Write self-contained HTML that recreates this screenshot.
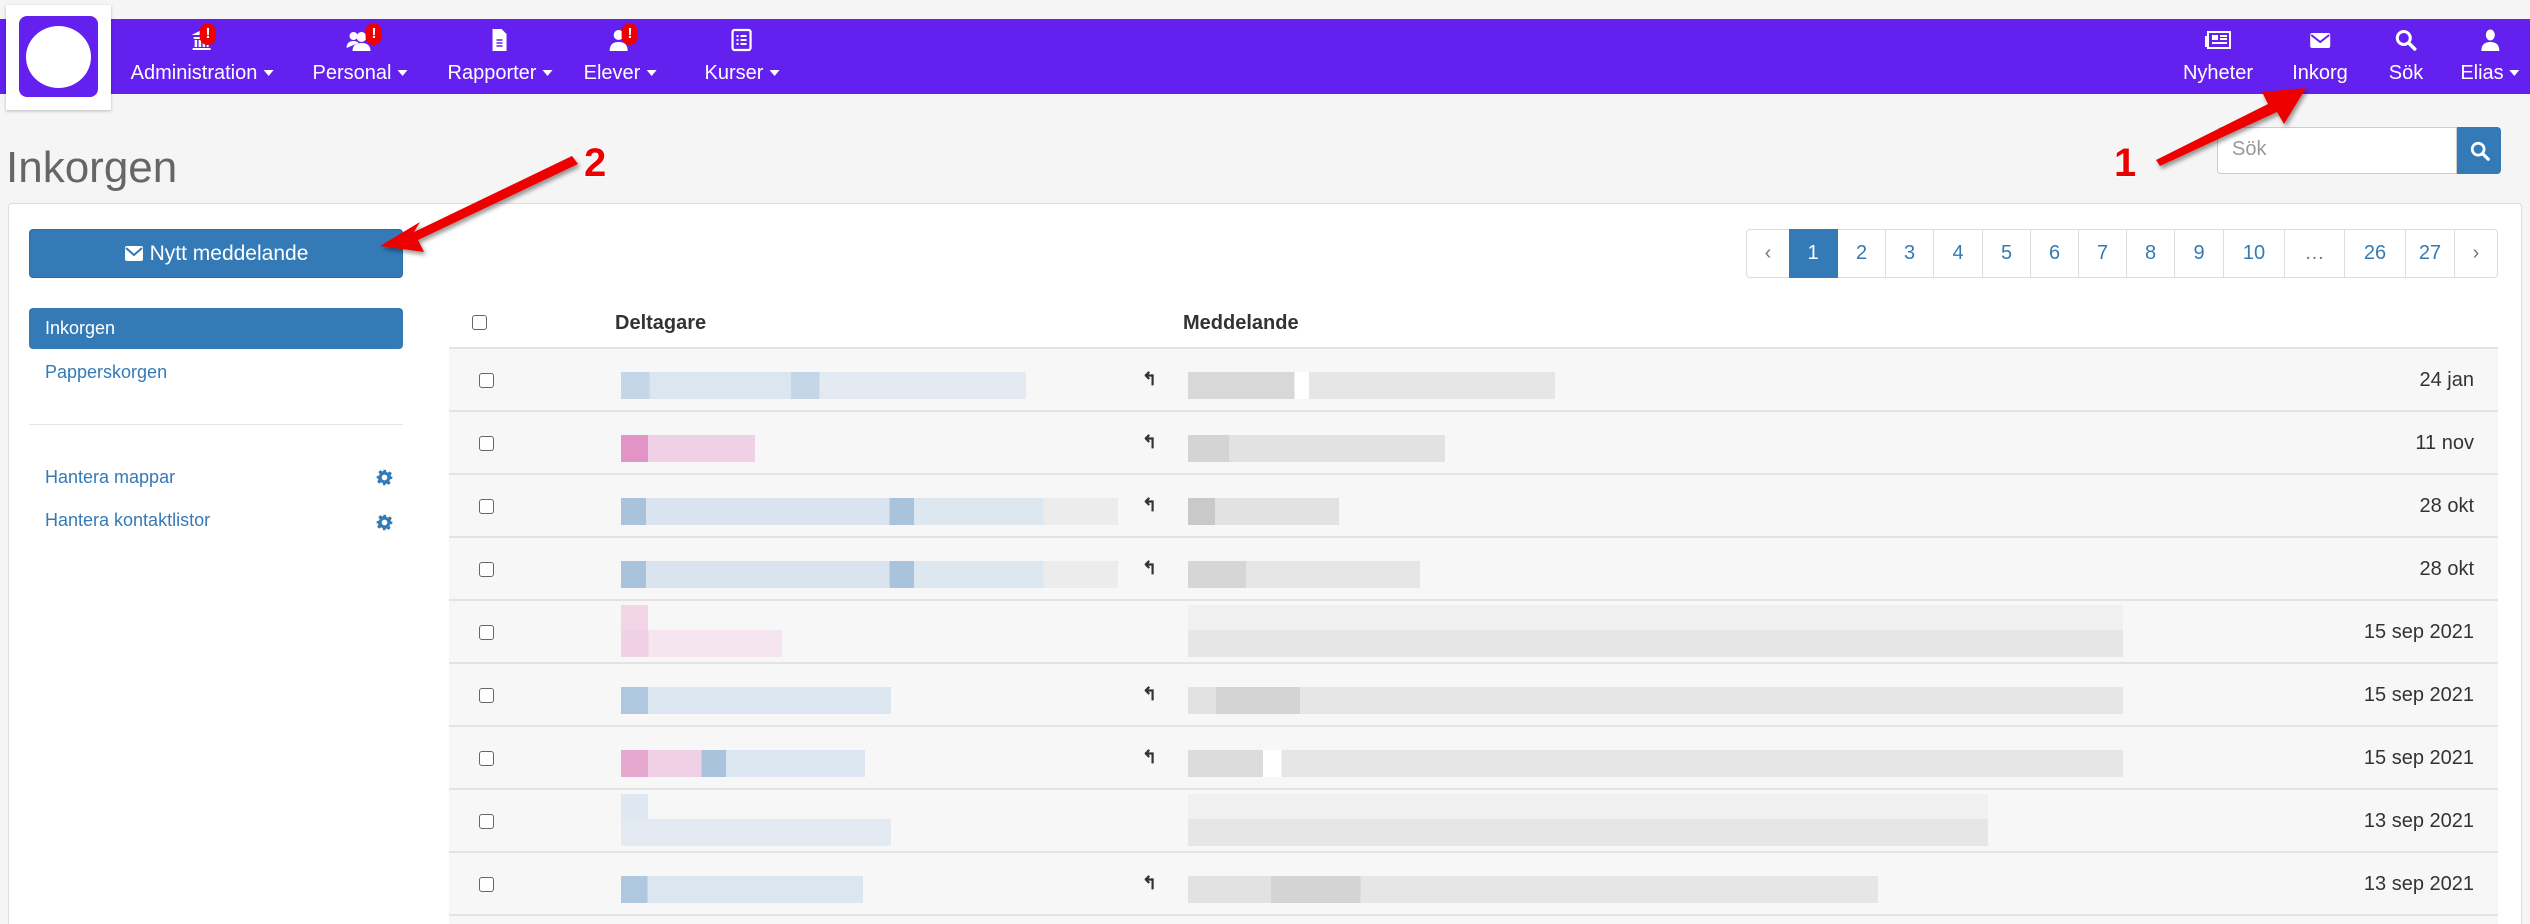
<!DOCTYPE html>
<html><head><meta charset="utf-8"><style>
*{box-sizing:border-box;margin:0;padding:0}
html,body{width:2530px;height:924px;overflow:hidden}
body{background:#f5f5f5;font-family:"Liberation Sans Narrow","Liberation Sans",sans-serif;position:relative;color:#333}
.a{position:absolute}
.nav{left:0;top:19px;width:2530px;height:75px;background:#6320ee}
.ni{position:absolute;top:19px;height:75px;color:#fff;font-size:20px;text-align:center;transform:translateX(-50%);white-space:nowrap}
.ni svg{display:block;margin:9px auto 0}
.ni span{display:block;margin-top:10px}
.car{display:inline-block;width:0;height:0;border-left:5px solid transparent;border-right:5px solid transparent;border-top:6px solid #fff;margin-left:6px;vertical-align:3px}
.bd{position:absolute;top:4px;left:50%;margin-left:6px;width:16px;height:22px;border-radius:8px;background:#e00;color:#fff;font-size:15px;font-weight:bold;line-height:22px;text-align:center;font-family:"Liberation Sans",sans-serif}
.pg{position:absolute;top:229px;height:49px;border:1px solid #ddd;border-left:none;background:#fff;color:#337ab7;font-size:20px;line-height:47px;text-align:center}
.row{position:absolute;left:449px;width:2049px;height:63px;background:#f7f7f7;border-top:2px solid #e3e3e3}
.cb{position:absolute;left:30px;width:15px;height:15px;border:1.5px solid #666;border-radius:3px;background:#fff}
.dt{position:absolute;right:24px;font-size:20px;color:#333}
.bl{position:absolute;height:27px}
.rp{position:absolute;left:693px;font-size:18px;font-weight:bold;color:#333}
.side{position:absolute;left:45px;font-size:18px;color:#337ab7;font-family:"Liberation Sans",sans-serif}
</style></head><body>
<div class="a nav"></div>
<div class="a" style="left:6px;top:5px;width:105px;height:105px;background:#fff;box-shadow:0 1px 3px rgba(0,0,0,.25)"></div>
<div class="a" style="left:19px;top:16px;width:79px;height:81px;background:#6320ee;border-radius:8px"></div>
<div class="a" style="left:26px;top:26px;width:65px;height:62px;background:#fff;border-radius:50%"></div>

<div class="ni" style="left:202px"><svg width="24" height="24" viewBox="0 0 24 24"><path d="M12 2 2 7h20zM4 9h16v2H4zM5 12h2.5v7H5zM9 12h2.5v7H9zM13 12h2.5v7H13zM17 12h2v7h-2zM3 20h18v2H3z" fill="#fff"/></svg><span>Administration<i class="car"></i></span><b class="bd" style="margin-left:-2px">!</b></div>
<div class="ni" style="left:360px"><svg width="28" height="24" viewBox="0 0 28 24"><circle cx="8" cy="8" r="4" fill="#fff"/><circle cx="16" cy="9" r="5" fill="#fff"/><path d="M1 20c0-5 3-7 7-7s5 2 5 2M7 23c0-6 4-8 9-8s9 2 9 8z" fill="#fff"/></svg><span>Personal<i class="car"></i></span><b class="bd">!</b></div>
<div class="ni" style="left:500px"><svg width="20" height="24" viewBox="0 0 20 24"><path d="M3 1h9l5 5v17H3z" fill="#fff"/><path d="M7 12h6M7 15h6M7 18h6" stroke="#6320ee" stroke-width="1.5"/></svg><span>Rapporter<i class="car"></i></span></div>
<div class="ni" style="left:620px"><svg width="24" height="24" viewBox="0 0 24 24"><circle cx="11" cy="7" r="5" fill="#fff"/><path d="M2 23c0-7 4-9 9-9s9 2 9 9z" fill="#fff"/></svg><span>Elever<i class="car"></i></span><b class="bd" style="margin-left:2px">!</b></div>
<div class="ni" style="left:742px"><svg width="24" height="24" viewBox="0 0 24 24"><rect x="3" y="2" width="18" height="20" rx="2" fill="none" stroke="#fff" stroke-width="2.2"/><path d="M7 8h2M11 8h6M7 12h2M11 12h6M7 16h2M11 16h6" stroke="#fff" stroke-width="2"/></svg><span>Kurser<i class="car"></i></span></div>

<div class="ni" style="left:2218px"><svg width="28" height="24" viewBox="0 0 28 24"><rect x="4" y="4" width="22" height="16" fill="none" stroke="#fff" stroke-width="2"/><rect x="8" y="7" width="6" height="5" fill="#fff"/><path d="M16 8h7M16 11h7M8 15h15M2 8v11" stroke="#fff" stroke-width="2"/></svg><span>Nyheter</span></div>
<div class="ni" style="left:2320px"><svg width="24" height="24" viewBox="0 0 24 24"><rect x="2" y="5" width="20" height="15" rx="2" fill="#fff"/><path d="M3 7l9 7 9-7" stroke="#6320ee" stroke-width="2" fill="none"/></svg><span>Inkorg</span></div>
<div class="ni" style="left:2406px"><svg width="24" height="24" viewBox="0 0 24 24"><circle cx="10" cy="10" r="6.5" fill="none" stroke="#fff" stroke-width="3"/><path d="M15 15l6 6" stroke="#fff" stroke-width="3.5" stroke-linecap="round"/></svg><span>Sök</span></div>
<div class="ni" style="left:2490px"><svg width="24" height="24" viewBox="0 0 24 24"><ellipse cx="12" cy="7" rx="4.5" ry="5.5" fill="#fff"/><path d="M3 23c0-6 3-9 9-9s9 3 9 9z" fill="#fff"/></svg><span>Elias<i class="car"></i></span></div>

<div class="a" style="left:6px;top:138px;font-size:44px;color:#666;line-height:60px">Inkorgen</div>
<div class="a" style="left:2217px;top:127px;width:240px;height:47px;background:#fff;border:1px solid #ccc;border-radius:4px 0 0 4px;font-size:20px;color:#999;padding:10px 14px">Sök</div>
<div class="a" style="left:2457px;top:127px;width:44px;height:47px;background:#337ab7;border-radius:0 4px 4px 0"><svg style="position:absolute;left:12px;top:13px" width="22" height="22" viewBox="0 0 24 24"><circle cx="10" cy="10" r="6.5" fill="none" stroke="#fff" stroke-width="3"/><path d="M15 15l6 6" stroke="#fff" stroke-width="3.5" stroke-linecap="round"/></svg></div>

<div class="a" style="left:8px;top:203px;width:2514px;height:721px;background:#fff;border:1px solid #ddd;border-bottom:none;border-radius:4px 4px 0 0"></div>
<div class="a" style="left:29px;top:229px;width:374px;height:49px;background:#337ab7;border:1px solid #2e6da4;border-radius:4px;color:#fff;font-size:21px;text-align:center;line-height:47px"><svg width="20" height="17" viewBox="0 0 20 17" style="vertical-align:-2px;margin-right:6px"><rect x="1" y="1" width="18" height="15" rx="2" fill="#fff"/><path d="M2 3l8 7 8-7" stroke="#337ab7" stroke-width="2" fill="none"/></svg>Nytt meddelande</div>

<div class="pg" style="left:1746px;width:44px;border-left:1px solid #ddd;border-radius:4px 0 0 4px;color:#777">‹</div>
<div class="pg" style="left:1789px;width:49px;background:#337ab7;color:#fff;border-color:#337ab7">1</div>
<div class="pg" style="left:1838px;width:48px">2</div>
<div class="pg" style="left:1886px;width:48px">3</div>
<div class="pg" style="left:1934px;width:49px">4</div>
<div class="pg" style="left:1983px;width:48px">5</div>
<div class="pg" style="left:2031px;width:48px">6</div>
<div class="pg" style="left:2079px;width:48px">7</div>
<div class="pg" style="left:2127px;width:48px">8</div>
<div class="pg" style="left:2175px;width:49px">9</div>
<div class="pg" style="left:2224px;width:61px">10</div>
<div class="pg" style="left:2285px;width:60px;color:#777">…</div>
<div class="pg" style="left:2345px;width:61px">26</div>
<div class="pg" style="left:2406px;width:49px">27</div>
<div class="pg" style="left:2455px;width:43px;border-radius:0 4px 4px 0;color:#777">›</div>

<div class="a" style="left:29px;top:308px;width:374px;height:41px;background:#337ab7;border-radius:4px"></div>
<div class="side" style="top:318px;color:#fff">Inkorgen</div>
<div class="side" style="top:362px">Papperskorgen</div>
<div class="a" style="left:29px;top:424px;width:374px;height:1px;background:#e5e5e5"></div>
<div class="side" style="top:467px">Hantera mappar</div>
<div class="side" style="top:510px">Hantera kontaktlistor</div>
<svg class="a" style="left:376px;top:469px" width="17" height="17" viewBox="0 0 24 24"><path fill="#337ab7" d="M10 1h4l.6 3.2 2.3 1 2.7-1.9 2.8 2.8-1.9 2.7 1 2.3L23 10v4l-3.2.6-1 2.3 1.9 2.7-2.8 2.8-2.7-1.9-2.3 1L14 23h-4l-.6-3.2-2.3-1-2.7 1.9-2.8-2.8 1.9-2.700-1-2.3L1 14v-4l3.2-.6 1-2.3-1.9-2.7 2.8-2.8 2.7 1.9 2.3-1zM12 8a4 4 0 100 8 4 4 0 000-8z"/></svg>
<svg class="a" style="left:376px;top:514px" width="17" height="17" viewBox="0 0 24 24"><path fill="#337ab7" d="M10 1h4l.6 3.2 2.3 1 2.7-1.9 2.8 2.8-1.9 2.7 1 2.3L23 10v4l-3.2.6-1 2.3 1.9 2.7-2.8 2.8-2.7-1.9-2.3 1L14 23h-4l-.6-3.2-2.3-1-2.7 1.9-2.8-2.8 1.9-2.7-1-2.3L1 14v-4l3.2-.6 1-2.3-1.9-2.7 2.8-2.8 2.7 1.9 2.3-1zM12 8a4 4 0 100 8 4 4 0 000-8z"/></svg>

<div class="cb" style="left:472px;top:315px"></div>
<div class="a" style="left:615px;top:312px;font-size:20px;font-weight:bold">Deltagare</div>
<div class="a" style="left:1183px;top:312px;font-size:20px;font-weight:bold">Meddelande</div>
<div class="a" style="left:449px;top:347px;width:2049px;height:577px;background:#f7f7f7;border:1px solid #e3e3e3;border-bottom:none;border-radius:4px 4px 0 0"></div>

<div class="row" style="top:347px"><div class="cb" style="top:24px"></div><div class="bl" style="left:172px;top:23px;width:405px;background:linear-gradient(90deg,#c5d6e8 0 7%,#dce6f0 7% 42%,#c5d6e8 42% 49%,#e3eaf2 49% 100%)"></div><span class="rp" style="top:20px">↰</span><div class="bl" style="left:739px;top:23px;width:367px;background:linear-gradient(90deg,#d8d8d8 0 29%,#fff 29% 33%,#e6e6e6 33% 100%)"></div><span class="dt" style="top:20px">24 jan</span></div>
<div class="row" style="top:410px"><div class="cb" style="top:24px"></div><div class="bl" style="left:172px;top:23px;width:134px;background:linear-gradient(90deg,#e294c6 0 20%,#f0d0e4 20%)"></div><span class="rp" style="top:20px">↰</span><div class="bl" style="left:739px;top:23px;width:257px;background:linear-gradient(90deg,#d4d4d4 0 16%,#e2e2e2 16%)"></div><span class="dt" style="top:20px">11 nov</span></div>
<div class="row" style="top:473px"><div class="cb" style="top:24px"></div><div class="bl" style="left:172px;top:23px;width:497px;background:linear-gradient(90deg,#a9c3dc 0 5%,#d9e4ef 5% 54%,#aac3dc 54% 59%,#dde7f0 59% 85%,#ececec 85%)"></div><span class="rp" style="top:20px">↰</span><div class="bl" style="left:739px;top:23px;width:151px;background:linear-gradient(90deg,#c9c9c9 0 18%,#e2e2e2 18%)"></div><span class="dt" style="top:20px">28 okt</span></div>
<div class="row" style="top:536px"><div class="cb" style="top:24px"></div><div class="bl" style="left:172px;top:23px;width:497px;background:linear-gradient(90deg,#a9c3dc 0 5%,#d9e4ef 5% 54%,#aac3dc 54% 59%,#dde7f0 59% 85%,#ececec 85%)"></div><span class="rp" style="top:20px">↰</span><div class="bl" style="left:739px;top:23px;width:232px;background:linear-gradient(90deg,#d6d6d6 0 25%,#e6e6e6 25%)"></div><span class="dt" style="top:20px">28 okt</span></div>
<div class="row" style="top:599px"><div class="cb" style="top:24px"></div><div class="bl" style="left:172px;top:4px;width:27px;background:#f2d6e7"></div><div class="bl" style="left:172px;top:29px;width:161px;background:linear-gradient(90deg,#f0d0e4 0 17%,#f5e5ee 17%)"></div><div class="bl" style="left:739px;top:4px;width:935px;background:#f0f0f0"></div><div class="bl" style="left:739px;top:29px;width:935px;background:#e6e6e6"></div><span class="dt" style="top:20px">15 sep 2021</span></div>
<div class="row" style="top:662px"><div class="cb" style="top:24px"></div><div class="bl" style="left:172px;top:23px;width:270px;background:linear-gradient(90deg,#b0c8df 0 10%,#dce6f0 10%)"></div><span class="rp" style="top:20px">↰</span><div class="bl" style="left:739px;top:23px;width:935px;background:linear-gradient(90deg,#e2e2e2 0 3%,#d4d4d4 3% 12%,#e6e6e6 12%)"></div><span class="dt" style="top:20px">15 sep 2021</span></div>
<div class="row" style="top:725px"><div class="cb" style="top:24px"></div><div class="bl" style="left:172px;top:23px;width:244px;background:linear-gradient(90deg,#e6a8cf 0 11%,#f0d0e4 11% 33%,#a9c3dc 33% 43%,#dce6f0 43%)"></div><span class="rp" style="top:20px">↰</span><div class="bl" style="left:739px;top:23px;width:935px;background:linear-gradient(90deg,#dcdcdc 0 8%,#fff 8% 10%,#e6e6e6 10%)"></div><span class="dt" style="top:20px">15 sep 2021</span></div>
<div class="row" style="top:788px"><div class="cb" style="top:24px"></div><div class="bl" style="left:172px;top:4px;width:27px;background:#dfe7f0"></div><div class="bl" style="left:172px;top:29px;width:270px;background:#e3eaf2"></div><div class="bl" style="left:739px;top:4px;width:800px;background:#f0f0f0"></div><div class="bl" style="left:739px;top:29px;width:800px;background:#e6e6e6"></div><span class="dt" style="top:20px">13 sep 2021</span></div>
<div class="row" style="top:851px;height:73px"><div class="cb" style="top:24px"></div><div class="bl" style="left:172px;top:23px;width:242px;background:linear-gradient(90deg,#b0c8df 0 11%,#dce6f0 11%)"></div><span class="rp" style="top:20px">↰</span><div class="bl" style="left:739px;top:23px;width:690px;background:linear-gradient(90deg,#e2e2e2 0 12%,#d4d4d4 12% 25%,#e6e6e6 25%)"></div><span class="dt" style="top:20px">13 sep 2021</span></div>
<div class="a" style="left:449px;top:914px;width:2049px;height:2px;background:#e3e3e3"></div>

<svg class="a" style="left:0;top:0" width="2530" height="924">
<defs><filter id="s"><feDropShadow dx="2" dy="3" stdDeviation="2" flood-opacity=".4"/></filter></defs>
<g filter="url(#s)" fill="#ee0000">
<path d="M2156 160 L2268 104 L2262 92 L2306 88 L2284 124 L2277 112 L2160 166z"/>
<path d="M572 156 L414 232 L420 222 L380 246 L424 252 L418 240 L578 164z"/>
</g>
<g font-family="Liberation Sans,sans-serif" font-weight="bold" font-size="40" fill="#ee0000" stroke="#fff" stroke-width="2" paint-order="stroke">
<text x="2114" y="176">1</text>
<text x="584" y="176">2</text>
</g>
</svg>
</body></html>
